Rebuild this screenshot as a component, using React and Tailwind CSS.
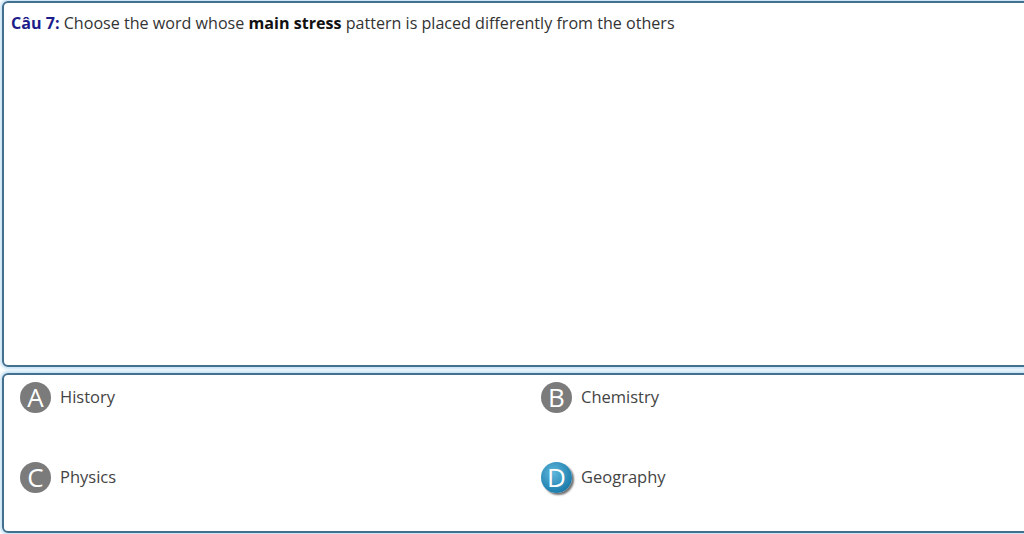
import React from "react";

const font = { fontFamily: '"Open Sans", "Noto Sans", sans-serif' };

function Badge({ letter, active }) {
  if (active) {
    return (
      <div className="w-[31px] h-[31px] rounded-full flex items-center justify-center text-white text-[26px] leading-none bg-[radial-gradient(circle_at_40%_35%,#5fb8dc,#1f7fae_70%,#135e86)] shadow-[2px_2px_2px_rgba(0,0,0,0.55)]">
        <span className="-mt-[2px]">{letter}</span>
      </div>
    );
  }
  return (
    <div className="w-[31px] h-[31px] rounded-full flex items-center justify-center text-white text-[26px] leading-none bg-[#7b7b7b]">
      <span className="-mt-[2px]">{letter}</span>
    </div>
  );
}

function Option({ letter, text, active }) {
  return (
    <div className="flex items-center gap-[9px] h-[31px]">
      <Badge letter={letter} active={active} />
      <span className="text-[16.5px] text-[#444] -mt-[1px]">{text}</span>
    </div>
  );
}

export default function App() {
  return (
    <div className="w-[1024px] h-[534px] overflow-hidden bg-white" style={font}>
      <div className="w-[1060px] pl-[2px] pt-[1px]">
        <div className="h-[366px] rounded-[6px] border-2 border-[#43708f] shadow-[0_0_3px_2px_#c5e2f5] px-[7px] pt-[9px]">
          <p className="text-[16.1px] text-[#333] leading-[22px]">
            <span className="font-bold text-[#1c1c8a]">Câu 7:</span> Choose the word whose{" "}
            <span className="font-bold text-[#111]">main stress</span> pattern is placed differently from the others
          </p>
        </div>
        <div className="mt-[6px] h-[160px] rounded-[6px] border-2 border-[#43708f] shadow-[0_0_3px_2px_#c5e2f5] pl-[16px] pt-[7px]">
          <div className="grid grid-cols-[521px_1fr] gap-y-[49px]">
            <Option letter="A" text="History" />
            <Option letter="B" text="Chemistry" />
            <Option letter="C" text="Physics" />
            <Option letter="D" text="Geography" active />
          </div>
        </div>
      </div>
    </div>
  );
}
